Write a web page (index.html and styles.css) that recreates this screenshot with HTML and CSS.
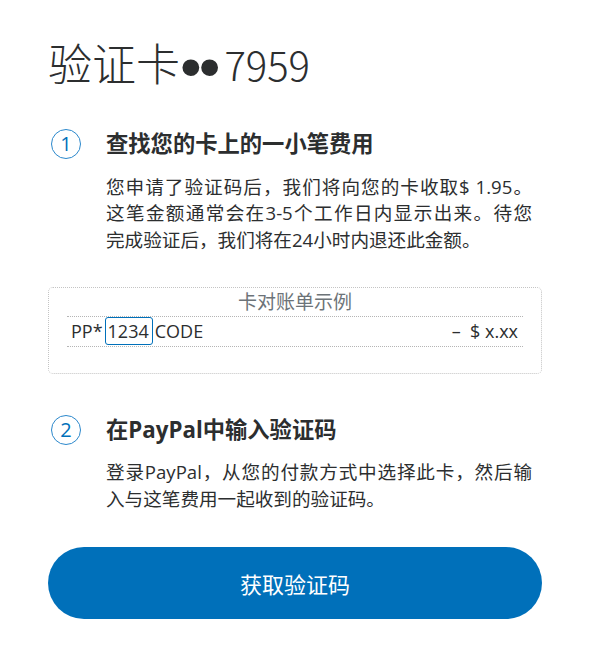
FILE: index.html
```html
<!DOCTYPE html>
<html lang="zh-CN">
<head>
<meta charset="utf-8">
<title>验证卡</title>
<link rel="stylesheet" href="styles.css">
</head>
<body>
<main class="page">
  <h1 class="title">验证卡<span class="dots">••</span><span class="digits">7959</span></h1>

  <section class="step step-first">
    <div class="step-head">
      <span class="step-num">1</span>
      <h2 class="step-title">查找您的卡上的一小笔费用</h2>
    </div>
    <p class="step-text">
      <span class="line">您申请了验证码后，我们将向您的卡收取$ 1.95。</span>
      <span class="line">这笔金额通常会在3-5个工作日内显示出来。待您</span>
      <span class="line last">完成验证后，我们将在24小时内退还此金额。</span>
    </p>
  </section>

  <div class="statement">
    <div class="statement-title">卡对账单示例</div>
    <div class="statement-row">
      <span class="descriptor">PP*<span class="code-box">1234</span>CODE</span>
      <span class="amount">–  $ x.xx</span>
    </div>
  </div>

  <section class="step step-second">
    <div class="step-head">
      <span class="step-num">2</span>
      <h2 class="step-title">在PayPal中输入验证码</h2>
    </div>
    <p class="step-text">
      <span class="line">登录PayPal，从您的付款方式中选择此卡，然后输</span>
      <span class="line last">入与这笔费用一起收到的验证码。</span>
    </p>
  </section>

  <button class="primary-btn" type="button">获取验证码</button>
</main>
</body>
</html>
```

FILE: styles.css
```css
html, body {
  margin: 0;
  padding: 0;
  background: #ffffff;
}

body {
  font-family: "Open Sans", "Noto Sans CJK SC", sans-serif;
  color: #2c2e2f;
}

.page {
  width: 494px;
  padding: 36px 0 0 48px;
  display: flex;
  flex-direction: column;
}

.title {
  margin: 0;
  font-family: "Noto Sans CJK SC", sans-serif;
  font-weight: 300;
  font-size: 44px;
  line-height: 52px;
  color: #2c2e2f;
  white-space: nowrap;
}

.dots {
  font-family: "Liberation Sans", sans-serif;
  font-weight: 400;
  font-size: 62px;
  line-height: 0;
  letter-spacing: -3px;
  margin-left: 0;
  margin-right: 7px;
  vertical-align: -7px;
}

.digits {
  font-size: 40px;
}

.step-first {
  margin-top: 39px;
}

.step-second {
  margin-top: 41px;
}

.step-head {
  display: flex;
  align-items: center;
  gap: 25px;
  padding-left: 3px;
}

.step-num {
  box-sizing: border-box;
  width: 30px;
  height: 30px;
  border: 1px solid #2b88cc;
  border-radius: 50%;
  display: flex;
  align-items: center;
  justify-content: center;
  font-family: "Open Sans", sans-serif;
  font-size: 20px;
  line-height: 1;
  color: #0070ba;
}

.step-title {
  margin: 0;
  font-family: "Open Sans", "Noto Sans CJK SC", sans-serif;
  font-weight: 700;
  font-size: 22.3px;
  line-height: 30px;
  color: #2c2e2f;
}

.step-text {
  margin: 14.6px 0 0 58px;
  width: 426px;
  font-size: 18.6px;
  line-height: 26.7px;
  color: #2c2e2f;
}

.line {
  display: block;
  white-space: nowrap;
  text-align: justify;
  text-align-last: justify;
}

.line.last {
  text-align-last: auto;
}

.statement {
  margin-top: 33px;
  box-sizing: border-box;
  height: 87px;
  border: 1px dotted #c4c4c4;
  border-radius: 5px;
  padding: 0 18px 0 18px;
}

.statement-title {
  text-align: center;
  font-size: 19px;
  line-height: 28px;
  color: #6c7378;
}

.statement-row {
  display: flex;
  align-items: center;
  justify-content: space-between;
  height: 29px;
  border-top: 1px dotted #b5b5b5;
  border-bottom: 1px dotted #b5b5b5;
  padding: 0 5px 0 4px;
  font-size: 18px;
  color: #2c2e2f;
}

.descriptor {
  display: flex;
  align-items: center;
}

.code-box {
  box-sizing: border-box;
  height: 28px;
  margin: 0 2px;
  padding: 0 3px 0 2px;
  border: 1px solid #0070ba;
  border-radius: 3px;
  line-height: 26px;
}

.amount {
  white-space: pre;
}

.primary-btn {
  margin-top: 34px;
  width: 494px;
  height: 72px;
  border: none;
  border-radius: 36px;
  background: #0070ba;
  color: #ffffff;
  font-family: "Noto Sans CJK SC", sans-serif;
  font-size: 22px;
  font-weight: 400;
  cursor: pointer;
}
```
